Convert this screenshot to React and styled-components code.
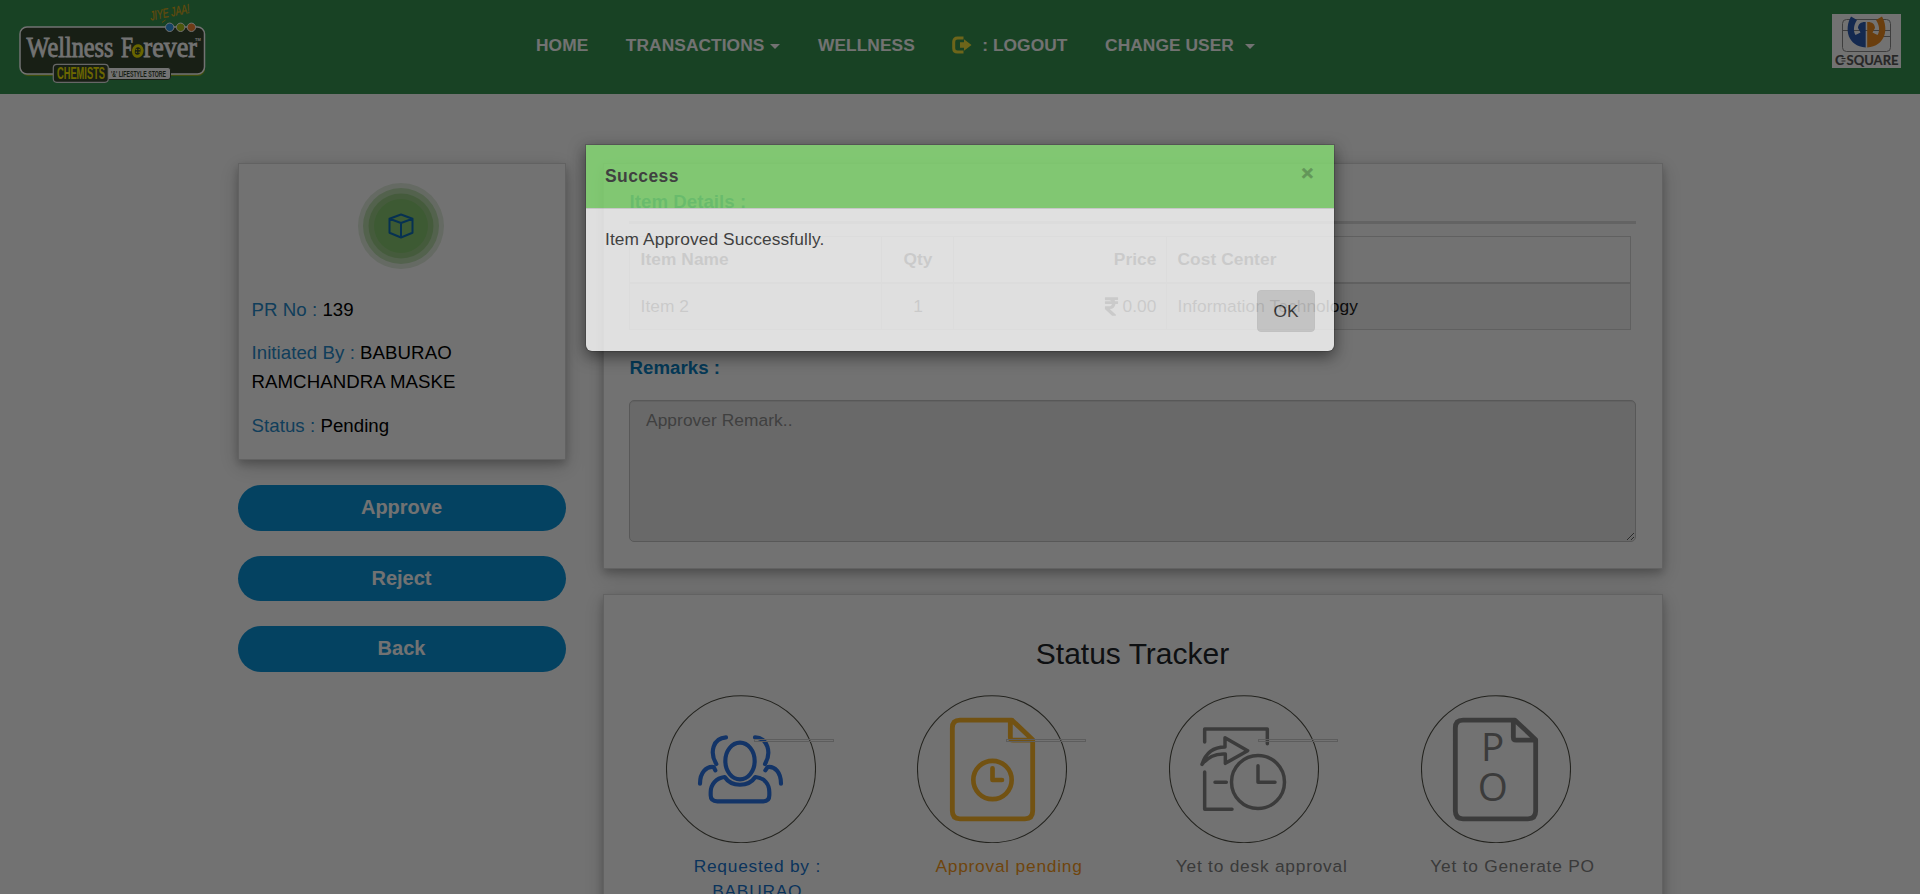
import React from "react";
import styled, { createGlobalStyle } from "styled-components";
import { FaRupeeSign } from "react-icons/fa";

const GlobalStyle = createGlobalStyle`
  * { box-sizing: border-box; }
  html, body { margin: 0; padding: 0; overflow: hidden; }
  body { background: #fdfdfd; font-family: "Liberation Sans", Arial, sans-serif; color: #000; }
`;

const Page = styled.div`
  position: relative;
  height: 894px;
  overflow: hidden;
`;

const Navbar = styled.header`
  display: flex;
  justify-content: space-between;
  height: 94px;
  background: #359350;
`;

const Menu = styled.nav`
  display: flex;
  align-items: center;
  gap: 37.6px;
  height: 90px;
  margin-left: 99.5px;
  flex: 1;
`;

const MenuItem = styled.a`
  display: flex;
  align-items: center;
  white-space: pre;
  color: #fdfdfd;
  font-size: 17.33px;
  font-weight: bold;
  line-height: 25px;
  letter-spacing: 0.07px;
`;

const Caret = styled.span`
  margin: 3px 0 0 ${(p) => p.$gap}px;
  border: 5px solid transparent;
  border-top-color: #fdfdfd;
  border-bottom: 0;
`;

const BrandLogo = styled.svg`
  display: block;
  flex: none;
  width: 220px;
  height: 94px;
  margin-right: 216.5px;
`;

const PartnerLogo = styled.svg`
  display: block;
  flex: none;
  width: 69px;
  height: 54px;
  margin: 14px 19px 0 0;
  background: #fdfdfd;
`;

const Content = styled.main`
  display: flex;
  align-items: flex-start;
  gap: 37px;
  padding: 69px 0 0 238px;
`;

const Column = styled.div`
  display: flex;
  flex-direction: column;
  gap: 25px;
  width: ${(p) => p.$width}px;
`;

const Card = styled.section`
  border: 1px solid #d9d9d9;
  background: #fdfdfd;
  box-shadow: 0 4px 8px 0 rgba(0, 0, 0, 0.2), 0 6px 20px 0 rgba(0, 0, 0, 0.19);
`;

const SummaryCard = styled(Card)`
  height: 297px;
  padding: 35px 11.5px 0 12.5px;
`;

const Badge = styled.div`
  display: flex;
  align-items: center;
  justify-content: center;
  width: 54px;
  height: 54px;
  margin: 0 0 41.5px 122.5px;
  border-radius: 50%;
  background: #88c771;
  box-shadow: 0 0 0 5.5px #9acb86, 0 0 0 11px #b8d9ac, 0 0 0 16px #e0ebdc;
`;

const Fact = styled.p`
  margin: 0 0 13.2px;
  font-size: 18.67px;
  line-height: 29.87px;
  letter-spacing: 0.05px;
  color: #000;

  span { color: #2689c9; }
`;

const ActionButton = styled.button`
  height: 45.6px;
  border: 0;
  border-radius: 23px;
  background: #0b93d8;
  color: #fdfdfd;
  font: bold 20px/45.6px "Liberation Sans", Arial, sans-serif;
  padding: 0 1px 0 0;
`;

const DetailsCard = styled(Card)`
  height: 406px;
  padding: 25px 26px 0 25px;
`;

const Heading = styled.h2`
  margin: 0;
  padding-left: 0.5px;
  font-size: 18.67px;
  line-height: 25px;
  letter-spacing: 0.04px;
  color: #0b7fc0;
`;

const Rule = styled.div`
  height: 3px;
  margin: 7px 0 12px;
  background: #dcdcdc;
`;

const ItemTable = styled.div`
  width: 1002px;
  margin-bottom: 25px;
  border: 1px solid #d6d6d6;
`;

const TableRow = styled.div`
  display: grid;
  grid-template-columns: 252px 72px 213px 1fr;
  height: ${(p) => (p.$head ? 47 : 45)}px;
  border-bottom: ${(p) => (p.$head ? "2px solid #d6d6d6" : "0")};
  background: ${(p) => (p.$head ? "transparent" : "#f3f3f3")};
  font-weight: ${(p) => (p.$head ? "bold" : "normal")};
`;

const Cell = styled.div`
  display: flex;
  align-items: center;
  justify-content: ${(p) => p.$align || "flex-start"};
  padding: 0 9.5px 1px 10.5px;
  border-right: 1px solid #d6d6d6;
  font-size: 17.33px;
  letter-spacing: 0.07px;
  color: #212121;

  &:last-child { border-right: 0; }
`;

const Remark = styled.textarea`
  display: block;
  width: 100%;
  height: 142px;
  margin: 20px 0 0;
  padding: 7px 16px;
  border: 1px solid #c4c4c4;
  border-radius: 5px;
  background: #e9e9e9;
  box-shadow: inset 0 1px 1px rgba(0, 0, 0, 0.075);
  font: 17.33px/25px "Liberation Sans", Arial, sans-serif;
  letter-spacing: 0.07px;
  resize: vertical;

  &::placeholder { color: #8e8e8e; opacity: 1; }
`;

const TrackerCard = styled(Card)`
  height: 420px;
  padding: 41px 26px 0 25px;
`;

const TrackerTitle = styled.h1`
  margin: 0 0 23px;
  text-align: center;
  font-size: 30px;
  line-height: 36px;
  font-weight: normal;
  color: #212529;
`;

const Steps = styled.div`
  display: grid;
  grid-template-columns: repeat(4, 1fr);
`;

const Step = styled.div`
  position: relative;
  color: ${(p) => p.$color};
`;

const StepIcon = styled.svg`
  display: block;
  width: 150px;
  height: 148px;
  margin-left: 36.6px;
`;

const Connector = styled.div`
  position: absolute;
  left: calc(50% - 0.8px);
  top: 44px;
  width: 80px;
  height: 3px;
  border: 1px solid #cfcfcf;
`;

const StepLabel = styled.div`
  width: 170px;
  margin: 11px 0 0 43.3px;
  text-align: center;
  white-space: nowrap;
  font-size: 17.33px;
  line-height: 25.3px;
  letter-spacing: 0.77px;
`;

const Backdrop = styled.div`
  position: absolute;
  inset: 0;
  background: rgba(0, 0, 0, 0.55);
`;

const Dialog = styled.div`
  position: absolute;
  left: 586px;
  top: 145px;
  width: 748px;
  height: 206px;
  border-radius: 0 0 6px 6px;
  background: #fff;
  opacity: 0.78;
  box-shadow: 0 0 0 1px rgba(0, 0, 0, 0.2), 0 5px 15px 1px rgba(0, 0, 0, 0.6);
`;

const DialogHeader = styled.div`
  display: flex;
  justify-content: space-between;
  height: 64px;
  padding: 19px 19px 0;
  border-bottom: 1px solid #e0e0e0;
  background: #86e073;
`;

const DialogTitle = styled.h4`
  margin: 0;
  font-size: 17.5px;
  line-height: 25px;
  letter-spacing: 0.4px;
  color: #333;
`;

const CloseButton = styled.span`
  margin: -1px 1.5px 0 0;
  font-size: 21px;
  line-height: 20px;
  font-weight: bold;
  color: #000;
  opacity: 0.28;
  -webkit-text-stroke: 0.6px #000;
`;

const DialogMessage = styled.div`
  padding: 18px 19px 0;
  font-size: 17.33px;
  line-height: 25px;
  letter-spacing: 0.11px;
  color: #333;
`;

const DialogFooter = styled.div`
  display: flex;
  justify-content: flex-end;
  padding: 38px 19px 0;
`;

const OkButton = styled.button`
  width: 58px;
  height: 42px;
  padding: 0;
  border: 1px solid #d8d8d8;
  border-radius: 4px;
  background: #dcdcdc;
  color: #333;
  font: 17.33px "Liberation Sans", Arial, sans-serif;
`;

function WellnessLogo() {
  return (
    <BrandLogo viewBox="0 0 220 94">
      <rect x="21.5" y="29" width="183.5" height="47" rx="7" fill="#8fae1c" />
      <rect x="20" y="27" width="184.5" height="47" rx="7" fill="#37462f" stroke="#fdfdfd" strokeWidth="1.5" />
      <g fontFamily="Liberation Serif, serif" fontSize="28.5" fill="#fdfdfd" stroke="#fdfdfd" strokeWidth="0.8">
        <text x="26.5" y="56.5" textLength="87" lengthAdjust="spacingAndGlyphs">Wellness</text>
        <text x="121" y="56.5" textLength="12" lengthAdjust="spacingAndGlyphs">F</text>
        <text x="143.5" y="56.5" textLength="53.5" lengthAdjust="spacingAndGlyphs">rever</text>
      </g>
      <text x="195" y="41" fontSize="4" fontWeight="bold" fill="#fdfdfd">TM</text>
      <ellipse cx="137.7" cy="51" rx="4.3" ry="5.3" fill="#37462f" stroke="#e8e000" strokeWidth="3" transform="rotate(12 137.7 51)" />
      <g fill="#e8e000">
        <circle cx="136.4" cy="49.5" r="0.8" /><circle cx="139.2" cy="49.5" r="0.8" />
        <circle cx="136.4" cy="52.3" r="0.8" /><circle cx="139.2" cy="52.3" r="0.8" />
      </g>
      <rect x="107" y="67.5" width="63.5" height="12" rx="2.5" fill="#fdfdfd" stroke="#37462f" strokeWidth="1" />
      <rect x="53.3" y="64.3" width="55" height="18" rx="3.5" fill="#37462f" stroke="#e5e5e5" strokeWidth="1.2" />
      <text x="57" y="78.9" fontSize="15.8" fontWeight="bold" fill="#f2e600" textLength="48" lengthAdjust="spacingAndGlyphs">CHEMISTS</text>
      <text x="111" y="76.7" fontSize="9" fontWeight="bold" fill="#37462f" textLength="55" lengthAdjust="spacingAndGlyphs">'&amp;' LIFESTYLE STORE</text>
      <g stroke="#fdfdfd" strokeWidth="1">
        <circle cx="169.7" cy="27.3" r="4.2" fill="#2f96e0" />
        <circle cx="180.6" cy="27.3" r="4.2" fill="#a8c01c" />
        <circle cx="191.4" cy="27.3" r="4.2" fill="#f58634" />
      </g>
      <text x="151" y="20.5" transform="rotate(-11 151 20.5)" fontSize="13" fontStyle="italic" fill="#d9a51c" stroke="#d9a51c" strokeWidth="0.3" textLength="40" lengthAdjust="spacingAndGlyphs">JIYE JAA!</text>
      <path d="M162 22.500l3.500-2.500" stroke="#d9a51c" strokeWidth="1" />
    </BrandLogo>
  );
}

function CsquareLogo() {
  return (
    <PartnerLogo viewBox="0 0 69 54">
      <rect x="10.500" y="5.500" width="48" height="32" rx="4" fill="none" stroke="#8a8a8a" />
      <path d="M10.500 16.500H58.500M49 22.500H58.500" stroke="#8a8a8a" />
      <path d="M19 2.500L25 6C21.500 11 21 17 23.500 21L28.500 18.500L26 14C26 9.500 30 7.500 33.700 8V33.500C15.500 32 12 15 19 2.500Z" fill="#2d5bb0" />
      <path d="M50 2.500L44 6C47.500 11 48 17 45.500 21L40.500 18.500L43 14C43 9.500 39 7.500 35.200 8V33.500C53.500 32 57 15 50 2.500Z" fill="#ea8a20" />
      <g fontFamily="Lato, sans-serif" fontSize="14" fontWeight="bold" fill="#555" stroke="#555" strokeWidth="0.200">
        <text x="3" y="50.500" textLength="9" lengthAdjust="spacingAndGlyphs">C</text>
        <text x="14.500" y="50.500" textLength="52" lengthAdjust="spacingAndGlyphs">SQUARE</text>
      </g>
      <path d="M9.500 44.500H13.500M9.500 47H13.500" stroke="#555" strokeWidth="1" />
    </PartnerLogo>
  );
}

function LogoutIcon() {
  return (
    <svg width="20" height="18" viewBox="0 0 20 18">
      <path d="M11.500 2H5.500Q1.700 2 1.700 5.800V12.200Q1.700 16 5.500 16H11.500" fill="none" stroke="#f2e03a" strokeWidth="3" />
      <path d="M8 6.200H12V3.200L19.500 9L12 14.800V11.800H8Z" fill="#f2e03a" />
    </svg>
  );
}

function BoxIcon() {
  return (
    <svg width="26" height="26" viewBox="0 0 26 26" fill="none" stroke="#0f6db5" strokeWidth="2" strokeLinejoin="round">
      <path d="M13 1.500L24.500 5.800V19.800L13 24.500L1.500 19.800V5.800ZM1.500 5.800L13 10L24.500 5.800M13 10V24.500" />
    </svg>
  );
}

function PeopleIcon() {
  return (
    <StepIcon viewBox="78 44 450 444" fill="none" stroke="#2a74e4" strokeWidth="12.500" strokeLinecap="round" strokeLinejoin="round">
      <ellipse cx="303" cy="266.500" rx="223.500" ry="220.500" stroke="#4e4e44" strokeWidth="3.200" />
      <ellipse cx="300" cy="242" rx="44" ry="55" />
      <path d="M258 171C219 173 208 217 229 251M345 171C384 173 395 217 375 251" />
      <path d="M180 310C180 276 200 257 221 260L226 270M423 310C423 276 404 257 383 260L376 270" />
      <path d="M254 290C228 293 212 312 212 336V345Q212 363 232 363H370Q388 363 388 345V336C388 312 374 293 346 290C325 321 275 321 254 290Z" />
    </StepIcon>
  );
}

function DocumentOutline() {
  return (
    <path
      d="M366 119.500H210Q187 119.500 187 143V392Q187 415.500 210 415.500H405Q428 415.500 428 392V178L366 119.500H361V171Q361 179.500 369 179.500H428"
      strokeWidth="14.500"
      strokeLinejoin="round"
    />
  );
}

function PendingIcon() {
  return (
    <StepIcon viewBox="81 44 450 444" fill="none" stroke="#fcb628" strokeLinecap="round">
      <ellipse cx="306" cy="266.500" rx="223.500" ry="220.500" stroke="#4e4e44" strokeWidth="3.200" />
      <DocumentOutline />
      <circle cx="307.500" cy="299" r="57.500" strokeWidth="14" />
      <path d="M307.500 264V299H336" strokeWidth="14" strokeLinejoin="round" />
    </StepIcon>
  );
}

function DeskIcon() {
  return (
    <StepIcon viewBox="87 44 450 444" fill="none" stroke="#848484" strokeWidth="10.500" strokeLinecap="round" strokeLinejoin="round">
      <ellipse cx="312" cy="266.500" rx="223.500" ry="220.500" stroke="#4e4e44" strokeWidth="3.200" />
      <path d="M194 185V146H382V190M194 275V387H276M225 306H259M354 256V306H405" />
      <circle cx="354" cy="305" r="79.500" />
      <path d="M186 252C198 215 222 200 255 200V172L323 211L256 249V221C226 219 205 228 186 252Z" />
    </StepIcon>
  );
}

function PurchaseOrderIcon() {
  return (
    <StepIcon viewBox="93 44 450 444" fill="none" stroke="#848484">
      <ellipse cx="318" cy="266.500" rx="223.500" ry="220.500" stroke="#4e4e44" strokeWidth="3.200" />
      <g transform="translate(9 0)"><DocumentOutline /></g>
      <g fontFamily="Open Sans, sans-serif" fontSize="116" fill="#848484" stroke="none">
        <text x="273" y="243">P</text>
        <text x="308" y="363" textAnchor="middle">O</text>
      </g>
    </StepIcon>
  );
}

const steps = [
  { icon: PeopleIcon, color: "#1773cc", label: ["Requested by :", "BABURAO"] },
  { icon: PendingIcon, color: "#f5991c", label: ["Approval pending"] },
  { icon: DeskIcon, color: "#808080", label: ["Yet to desk approval"] },
  { icon: PurchaseOrderIcon, color: "#808080", label: ["Yet to Generate PO"] },
];

export default function App() {
  return (
    <>
      <GlobalStyle />
      <Page>
        <Navbar>
          <WellnessLogo />
          <Menu>
            <MenuItem>HOME</MenuItem>
            <MenuItem>TRANSACTIONS<Caret $gap={6} /></MenuItem>
            <MenuItem>WELLNESS</MenuItem>
            <MenuItem><LogoutIcon />{"  : LOGOUT"}</MenuItem>
            <MenuItem>CHANGE USER<Caret $gap={11} /></MenuItem>
          </Menu>
          <CsquareLogo />
        </Navbar>

        <Content>
          <Column $width={328}>
            <SummaryCard>
              <Badge><BoxIcon /></Badge>
              <Fact><span>PR No :</span> 139</Fact>
              <Fact><span>Initiated By :</span> BABURAO RAMCHANDRA MASKE</Fact>
              <Fact><span>Status :</span> Pending</Fact>
            </SummaryCard>
            <ActionButton>Approve</ActionButton>
            <ActionButton>Reject</ActionButton>
            <ActionButton>Back</ActionButton>
          </Column>

          <Column $width={1060}>
            <DetailsCard>
              <Heading>Item Details :</Heading>
              <Rule />
              <ItemTable>
                <TableRow $head>
                  <Cell>Item Name</Cell>
                  <Cell $align="center">Qty</Cell>
                  <Cell $align="flex-end">Price</Cell>
                  <Cell>Cost Center</Cell>
                </TableRow>
                <TableRow>
                  <Cell>Item 2</Cell>
                  <Cell $align="center">1</Cell>
                  <Cell $align="flex-end"><FaRupeeSign size={21} />0.00</Cell>
                  <Cell>Information Technology</Cell>
                </TableRow>
              </ItemTable>
              <Heading>Remarks :</Heading>
              <Remark placeholder="Approver Remark.." />
            </DetailsCard>

            <TrackerCard>
              <TrackerTitle>Status Tracker</TrackerTitle>
              <Steps>
                {steps.map(({ icon: Icon, color, label }, index) => (
                  <Step key={label[0]} $color={color}>
                    <Icon />
                    {index < steps.length - 1 && <Connector />}
                    <StepLabel>
                      {label.map((line) => <div key={line}>{line}</div>)}
                    </StepLabel>
                  </Step>
                ))}
              </Steps>
            </TrackerCard>
          </Column>
        </Content>

        <Backdrop />
        <Dialog>
          <DialogHeader>
            <DialogTitle>Success</DialogTitle>
            <CloseButton>×</CloseButton>
          </DialogHeader>
          <DialogMessage>Item Approved Successfully.</DialogMessage>
          <DialogFooter><OkButton>OK</OkButton></DialogFooter>
        </Dialog>
      </Page>
    </>
  );
}
